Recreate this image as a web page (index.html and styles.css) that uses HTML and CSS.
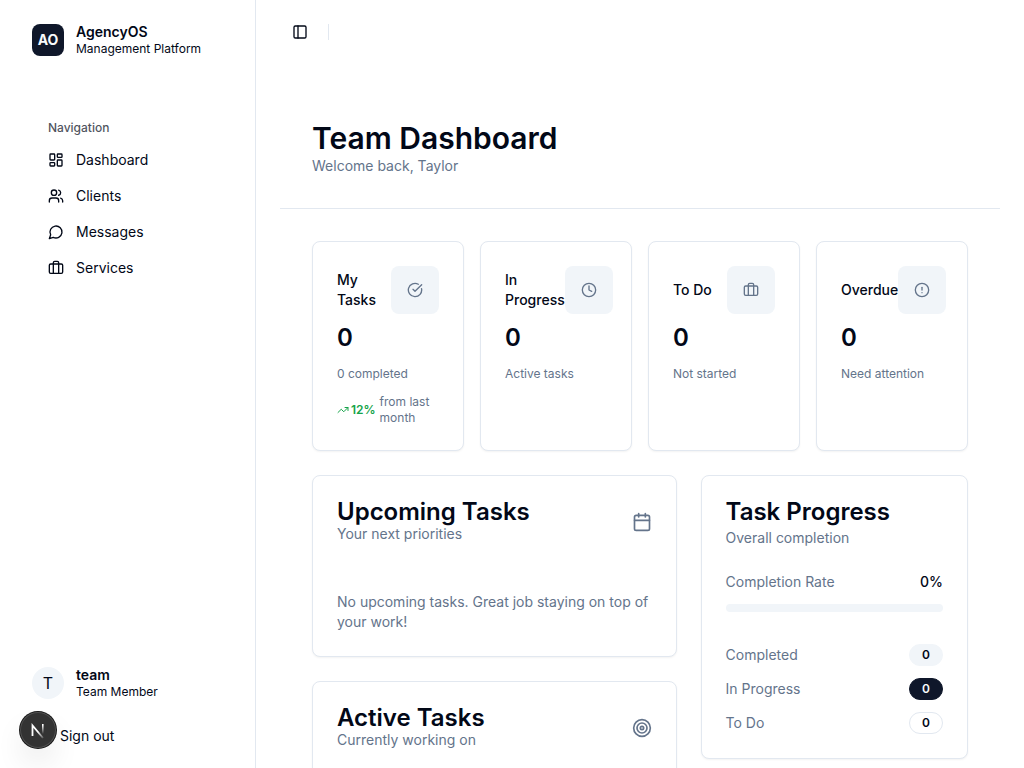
FILE: index.html
```html
<!DOCTYPE html>
<html lang="en">
<head>
<meta charset="utf-8">
<meta name="viewport" content="width=device-width, initial-scale=1">
<title>AgencyOS</title>
<link rel="stylesheet" href="styles.css">
</head>
<body>
<div class="shell">
  <aside class="sidebar">
    <div class="identity">
      <span class="logo">AO</span>
      <div class="identity-text">
        <span class="identity-name">AgencyOS</span>
        <span class="identity-note">Management Platform</span>
      </div>
    </div>
    <nav class="nav" aria-labelledby="nav-label">
      <div class="nav-label" id="nav-label">Navigation</div>
      <a class="nav-item" href="#dashboard">
        <svg class="icon" viewBox="0 0 24 24"><rect width="7" height="9" x="3" y="3" rx="1"/><rect width="7" height="5" x="14" y="3" rx="1"/><rect width="7" height="9" x="14" y="12" rx="1"/><rect width="7" height="5" x="3" y="16" rx="1"/></svg>
        Dashboard
      </a>
      <a class="nav-item" href="#clients">
        <svg class="icon" viewBox="0 0 24 24"><path d="M16 21v-2a4 4 0 0 0-4-4H6a4 4 0 0 0-4 4v2"/><circle cx="9" cy="7" r="4"/><path d="M22 21v-2a4 4 0 0 0-3-3.87"/><path d="M16 3.13a4 4 0 0 1 0 7.75"/></svg>
        Clients
      </a>
      <a class="nav-item" href="#messages">
        <svg class="icon" viewBox="0 0 24 24"><path d="M7.9 20A9 9 0 1 0 4 16.1L2 22Z"/></svg>
        Messages
      </a>
      <a class="nav-item" href="#services">
        <svg class="icon" viewBox="0 0 24 24"><path d="M16 20V4a2 2 0 0 0-2-2h-4a2 2 0 0 0-2 2v16"/><rect width="20" height="14" x="2" y="6" rx="2"/></svg>
        Services
      </a>
    </nav>
    <div class="sidebar-footer">
      <div class="account">
        <span class="avatar">T</span>
        <div class="identity-text">
          <span class="identity-name">team</span>
          <span class="identity-note">Team Member</span>
        </div>
      </div>
      <button class="sign-out" type="button">Sign out</button>
    </div>
  </aside>

  <div class="main">
    <header class="topbar">
      <button class="toggle" type="button" aria-label="Toggle sidebar">
        <svg class="icon" viewBox="0 0 24 24"><rect width="18" height="18" x="3" y="3" rx="2"/><path d="M9 3v18"/></svg>
      </button>
      <span class="divider"></span>
    </header>
    <main class="page">
      <div class="page-header">
        <h1 class="page-title">Team Dashboard</h1>
        <p class="text-muted">Welcome back, Taylor</p>
      </div>
      <div class="content">
        <section class="stats">
          <article class="card">
            <div class="stat-head">
              <h2 class="stat-title">My Tasks</h2>
              <span class="stat-icon"><svg class="icon" viewBox="0 0 24 24"><path d="M21.8 10A10 10 0 1 1 17 3.34"/><path d="m9 11 3 3L22 4"/></svg></span>
            </div>
            <div class="stat-value">0</div>
            <p class="stat-note">0 completed</p>
            <div class="trend">
              <span class="trend-value"><svg class="icon icon-small" viewBox="0 0 24 24"><path d="m22 7-8.500 8.500-5-5L2 17"/><path d="M16 7h6v6"/></svg>12%</span>
              <span>from last month</span>
            </div>
          </article>
          <article class="card">
            <div class="stat-head">
              <h2 class="stat-title">In Progress</h2>
              <span class="stat-icon"><svg class="icon" viewBox="0 0 24 24"><circle cx="12" cy="12" r="10"/><path d="M12 6v6l4 2"/></svg></span>
            </div>
            <div class="stat-value">0</div>
            <p class="stat-note">Active tasks</p>
          </article>
          <article class="card">
            <div class="stat-head">
              <h2 class="stat-title">To Do</h2>
              <span class="stat-icon"><svg class="icon" viewBox="0 0 24 24"><path d="M16 20V4a2 2 0 0 0-2-2h-4a2 2 0 0 0-2 2v16"/><rect width="20" height="14" x="2" y="6" rx="2"/></svg></span>
            </div>
            <div class="stat-value">0</div>
            <p class="stat-note">Not started</p>
          </article>
          <article class="card">
            <div class="stat-head">
              <h2 class="stat-title">Overdue</h2>
              <span class="stat-icon"><svg class="icon" viewBox="0 0 24 24"><circle cx="12" cy="12" r="10"/><path d="M12 8v4"/><path d="M12 16h.01"/></svg></span>
            </div>
            <div class="stat-value">0</div>
            <p class="stat-note">Need attention</p>
          </article>
        </section>

        <div class="panels">
          <div class="panels-main">
            <section class="card">
              <div class="panel-head">
                <div>
                  <h2 class="panel-title">Upcoming Tasks</h2>
                  <p class="text-muted">Your next priorities</p>
                </div>
                <svg class="icon icon-large" viewBox="0 0 24 24"><path d="M8 2v4"/><path d="M16 2v4"/><rect width="18" height="18" x="3" y="4" rx="2"/><path d="M3 10h18"/></svg>
              </div>
              <p class="panel-body text-muted">No upcoming tasks. Great job staying on top of your work!</p>
            </section>
            <section class="card">
              <div class="panel-head">
                <div>
                  <h2 class="panel-title">Active Tasks</h2>
                  <p class="text-muted">Currently working on</p>
                </div>
                <svg class="icon icon-large" viewBox="0 0 24 24"><circle cx="12" cy="12" r="10"/><circle cx="12" cy="12" r="6"/><circle cx="12" cy="12" r="2"/></svg>
              </div>
              <div class="panel-body"></div>
            </section>
          </div>
          <section class="card panels-side">
            <div class="progress-head">
              <h2 class="panel-title">Task Progress</h2>
              <p class="text-muted">Overall completion</p>
            </div>
            <div class="rate">
              <div class="row">
                <span class="text-muted">Completion Rate</span>
                <span class="rate-value">0%</span>
              </div>
              <div class="bar" role="progressbar" aria-label="Completion Rate" aria-valuenow="0" aria-valuemin="0" aria-valuemax="100"></div>
            </div>
            <div class="counts">
              <div class="row"><span class="text-muted">Completed</span><span class="badge badge-soft">0</span></div>
              <div class="row"><span class="text-muted">In Progress</span><span class="badge badge-dark">0</span></div>
              <div class="row"><span class="text-muted">To Do</span><span class="badge">0</span></div>
            </div>
          </section>
        </div>
      </div>
    </main>
  </div>
</div>

<button class="dev-button" type="button" aria-label="Open developer tools">
  <svg class="dev-mark" viewBox="0 0 36 36" fill="none">
    <defs>
      <linearGradient id="fade-diagonal" gradientUnits="userSpaceOnUse" x1="19" y1="19" x2="25" y2="27"><stop stop-color="#fff"/><stop offset="1" stop-color="#fff" stop-opacity="0"/></linearGradient>
      <linearGradient id="fade-stem" gradientUnits="userSpaceOnUse" x1="23" y1="13" x2="23" y2="22"><stop stop-color="#fff"/><stop offset="1" stop-color="#fff" stop-opacity="0"/></linearGradient>
    </defs>
    <path d="M12.500 24V13.500L23 26" stroke="url(#fade-diagonal)" stroke-width="1.800"/>
    <path d="M22.800 12v11" stroke="url(#fade-stem)" stroke-width="1.600"/>
  </svg>
</button>
</body>
</html>
```
FILE: styles.css
```css
:root {
  --ink: #020817;
  --muted: #64748b;
  --line: #e2e8f0;
  --soft: #f1f5f9;
  --dark: #0f172a;
}

* {
  box-sizing: border-box;
  margin: 0;
}

body {
  font: 14px/20px Inter, "Liberation Sans", sans-serif;
  color: var(--ink);
  background: #fff;
}

button {
  padding: 0;
  border: 0;
  background: none;
  font: inherit;
  color: inherit;
}

.icon {
  flex: none;
  width: 16px;
  height: 16px;
  fill: none;
  stroke: currentColor;
  stroke-width: 2;
  stroke-linecap: round;
  stroke-linejoin: round;
}

.icon-small {
  width: 12px;
  height: 12px;
}

.icon-large {
  width: 20px;
  height: 20px;
  color: var(--muted);
}

.text-muted {
  color: var(--muted);
}

.shell {
  display: flex;
  height: 100vh;
}

.sidebar {
  flex: none;
  display: flex;
  flex-direction: column;
  width: 256px;
  border-right: 1px solid var(--line);
}

.identity,
.account {
  display: flex;
  align-items: center;
  gap: 12px;
}

.identity {
  padding: 23px 32px;
}

.logo,
.avatar {
  display: flex;
  align-items: center;
  justify-content: center;
  width: 32px;
  height: 32px;
}

.logo {
  border-radius: 8px;
  background: var(--dark);
  color: #f8fafc;
  font-weight: 700;
}

.avatar {
  border-radius: 50%;
  background: var(--soft);
  font-size: 16px;
}

.identity-text {
  display: flex;
  flex-direction: column;
}

.identity-name {
  line-height: 18px;
  font-weight: 600;
}

.identity-note {
  font-size: 12px;
  line-height: 16px;
}

.nav {
  flex: 1;
  display: flex;
  flex-direction: column;
  gap: 4px;
  padding: 32px 40px;
}

.nav-label {
  padding: 8px 8px 4px;
  font-size: 12px;
  line-height: 16px;
  font-weight: 500;
  opacity: 0.7;
}

.nav-item {
  display: flex;
  align-items: center;
  gap: 12px;
  height: 32px;
  padding: 0 8px;
  color: inherit;
  text-decoration: none;
}

.sidebar-footer {
  display: flex;
  flex-direction: column;
  gap: 20px;
  padding: 0 32px 16px;
}

.sign-out {
  height: 32px;
  padding-left: 28px;
  text-align: left;
}

.main {
  flex: 1;
  min-width: 0;
  overflow-y: auto;
  scrollbar-width: none;
}

.topbar {
  display: flex;
  align-items: center;
  gap: 8px;
  height: 64px;
  padding: 0 24px;
}

.toggle {
  display: flex;
  align-items: center;
  justify-content: center;
  width: 40px;
  height: 28px;
}

.divider {
  width: 1px;
  height: 16px;
  background: var(--line);
}

.page {
  padding: 24px;
}

.page-header {
  padding: 32px;
  border-bottom: 1px solid var(--line);
}

.page-title {
  font-size: 30px;
  line-height: 36px;
  font-weight: 600;
}

.content {
  display: flex;
  flex-direction: column;
  gap: 24px;
  padding: 32px;
}

.stats {
  display: grid;
  grid-template-columns: repeat(4, minmax(0, 1fr));
  gap: 16px;
}

.card {
  padding: 24px;
  border: 1px solid var(--line);
  border-radius: 8px;
  background: #fff;
  box-shadow: 0 1px 2px rgba(0, 0, 0, 0.05);
}

.stat-head {
  display: flex;
  align-items: center;
  justify-content: space-between;
  margin-bottom: 8px;
}

.stat-title {
  font-size: 14px;
  line-height: 20px;
  font-weight: 500;
}

.stat-icon {
  flex: none;
  padding: 16px;
  border-radius: 8px;
  background: var(--soft);
  color: var(--muted);
  line-height: 0;
}

.stat-value {
  font-size: 24px;
  line-height: 32px;
  font-weight: 600;
}

.stat-note,
.trend {
  margin-top: 12px;
  font-size: 12px;
  line-height: 16px;
  color: var(--muted);
}

.trend {
  display: flex;
  align-items: center;
  gap: 4px;
}

.trend-value {
  display: flex;
  align-items: center;
  gap: 2px;
  font-weight: 600;
  color: #16a34a;
}

.panels {
  display: grid;
  grid-template-columns: repeat(7, minmax(0, 1fr));
  align-items: start;
  gap: 24px;
}

.panels-main {
  grid-column: span 4;
  display: flex;
  flex-direction: column;
  gap: 24px;
}

.panels-side {
  grid-column: span 3;
}

.panel-head,
.row {
  display: flex;
  align-items: center;
  justify-content: space-between;
}

.panel-title {
  font-size: 24px;
  line-height: 24px;
  font-weight: 600;
}

.panel-body {
  min-height: 40px;
  margin-top: 48px;
}

.progress-head {
  display: flex;
  flex-direction: column;
  gap: 4px;
  margin-bottom: 24px;
}

.rate-value {
  font-weight: 500;
}

.bar {
  height: 8px;
  margin-top: 12px;
  border-radius: 4px;
  background: var(--soft);
}

.counts {
  display: flex;
  flex-direction: column;
  gap: 12px;
  margin-top: 32px;
}

.badge {
  padding: 2px 12px;
  border: 1px solid var(--line);
  border-radius: 11px;
  font-size: 12px;
  line-height: 16px;
  font-weight: 600;
}

.badge-soft {
  border-color: var(--soft);
  background: var(--soft);
}

.badge-dark {
  border-color: var(--dark);
  background: var(--dark);
  color: #f8fafc;
}

.dev-button {
  position: fixed;
  left: 20px;
  bottom: 20px;
  width: 36px;
  height: 36px;
  border-radius: 50%;
  background: #333;
  box-shadow: 0 0 0 1px #171717, inset 0 0 0 1px rgba(255, 255, 255, 0.14), 0 16px 32px -8px rgba(0, 0, 0, 0.24);
}

.dev-mark {
  display: block;
  width: 100%;
}
```
